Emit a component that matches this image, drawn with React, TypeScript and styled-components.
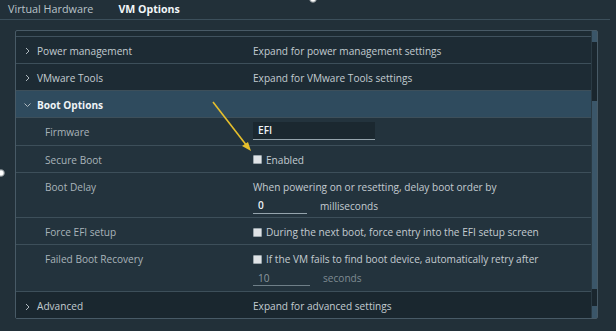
import styled, { createGlobalStyle } from "styled-components";

const GlobalStyle = createGlobalStyle`
  html, body {
    margin: 0;
    padding: 0;
    background: #223039;
  }
  body {
    font-family: "Open Sans", "Liberation Sans", sans-serif;
    font-size: 10.1px;
    color: #c3ccd1;
  }
`

const Page = styled.div`
  position: relative;
  width: 616px;
  height: 331px;
  overflow: hidden;
  background: #223039;
`

const Tabs = styled.div`
  display: flex;
  gap: 25px;
  height: 20px;
  padding-left: 8px;
  margin-right: 6px;
  border-bottom: 1px solid #3c4f5b;
  box-sizing: border-box;
`

const Tab = styled.div<{ $active?: boolean }>`
  font-size: ${(p) => (p.$active ? 10.6 : 10.8)}px;
  line-height: 14px;
  margin-top: 2px;
  color: ${(p) => (p.$active ? "#f2f6f8" : "#b9c3c9")};
  font-weight: ${(p) => (p.$active ? 700 : 400)};
`

const Panel = styled.div`
  display: flex;
  margin: 10px 18px 0 15px;
  height: 287px;
  border: 1px solid #485a66;
  border-radius: 2px;
  background: #1d2b33;
`

const List = styled.div`
  flex: 1;
  display: flex;
  flex-direction: column;
`

const TopStrip = styled.div`
  height: 5px;
  border-bottom: 1px solid #40525e;
`

const Row = styled.div<{ $tone?: "collapsed" | "header" | "child" | "dark"; $h?: number }>`
  display: grid;
  grid-template-columns: 237px 1fr;
  height: ${(p) => p.$h ?? 26}px;
  border-bottom: 1px solid #3d4f5a;
  background: ${(p) =>
    p.$tone === "header"
      ? "#2f4b5e"
      : p.$tone === "child"
      ? "#23333d"
      : p.$tone === "dark"
      ? "#1a272f"
      : "#1d2b34"};
  &:last-child {
    border-bottom: none;
  }
`

const Label = styled.div<{ $indent?: number; $bold?: boolean; $dim?: boolean }>`
  display: flex;
  align-items: flex-start;
  padding-left: ${(p) => p.$indent ?? 8}px;
  padding-top: 8px;
  font-weight: ${(p) => (p.$bold ? 700 : 400)};
  color: ${(p) => (p.$bold ? "#eef3f6" : p.$dim ? "#a9b4ba" : "#c3ccd1")};
  line-height: 13px;
`

const Chevron = styled.span<{ $open?: boolean }>`
  display: inline-flex;
  width: 12px;
  height: 13px;
  align-items: center;
  margin-right: 1px;
  svg {
    transform: rotate(${(p) => (p.$open ? 90 : 0)}deg);
  }
`

const Value = styled.div<{ $top?: number }>`
  display: flex;
  flex-direction: column;
  padding-top: ${(p) => p.$top ?? 8}px;
  line-height: 13px;
  color: #c3ccd1;
`

const Line = styled.div`
  display: flex;
  align-items: center;
  gap: 4px;
`

const Box = styled.span`
  width: 9px;
  height: 9px;
  border-radius: 1px;
  background: #dfe3e6;
  border: 1px solid #9aa5ab;
  box-sizing: border-box;
  margin-bottom: 1px;
`

const Field = styled.div<{ $w: number; $h?: number; $dim?: boolean; $filled?: boolean }>`
  width: ${(p) => p.$w}px;
  height: ${(p) => p.$h ?? 15}px;
  padding-left: 5px;
  box-sizing: border-box;
  display: flex;
  align-items: center;
  background: ${(p) => (p.$filled ? "#1b2830" : "transparent")};
  border-bottom: 1px solid ${(p) => (p.$dim ? "#6f7f88" : "#95a4ad")};
  color: ${(p) => (p.$dim ? "#8d999f" : "#eef3f6")};
  font-weight: ${(p) => (p.$dim ? 400 : 600)};
`

const FieldRow = styled.div`
  display: flex;
  align-items: center;
  gap: 13px;
  margin-top: 5px;
`

const Unit = styled.span<{ $dim?: boolean }>`
  color: ${(p) => (p.$dim ? "#7f8b92" : "#c3ccd1")};
`

const Scrollbar = styled.div`
  width: 5px;
  display: flex;
  flex-direction: column;
  background: #1a262e;
  border-left: 1px solid #2a3a44;
`

const ScrollPart = styled.div<{ $h: number; $light?: boolean }>`
  height: ${(p) => p.$h}px;
  flex: ${(p) => (p.$h === 0 ? 1 : "none")};
  background: ${(p) => (p.$light ? "#3b5669" : "transparent")};
`

const Arrow = styled.svg`
  position: absolute;
  left: 205px;
  top: 95px;
  pointer-events: none;
`

const Handle = styled.div<{ $x: number; $y: number }>`
  position: absolute;
  left: ${(p) => p.$x}px;
  top: ${(p) => p.$y}px;
  width: 8px;
  height: 8px;
  border-radius: 50%;
  background: radial-gradient(circle, #ffffff 35%, rgba(255, 255, 255, 0.2) 70%, transparent 75%);
`

const ChevronIcon = () => (
  <svg width="7" height="8" viewBox="0 0 7 8">
    <path d="M2 1 L5 4 L2 7" fill="none" stroke="#aeb8be" strokeWidth="1" />
  </svg>
)

const Collapsed = ({ title, desc, tone }: { title: string; desc: string; tone?: "dark" }) => (
  <Row $tone={tone ?? "collapsed"}>
    <Label>
      <Chevron><ChevronIcon /></Chevron>
      {title}
    </Label>
    <Value>{desc}</Value>
  </Row>
)

export default function App() {
  return (
    <Page>
      <GlobalStyle />
      <Tabs>
        <Tab>Virtual Hardware</Tab>
        <Tab $active>VM Options</Tab>
      </Tabs>
      <Panel>
        <List>
          <TopStrip />
          <Collapsed title="Power management" desc="Expand for power management settings" />
          <Collapsed title="VMware Tools" desc="Expand for VMware Tools settings" />
          <Row $tone="header">
            <Label $bold>
              <Chevron $open><ChevronIcon /></Chevron>
              Boot Options
            </Label>
            <div />
          </Row>
          <Row $tone="child" $h={27}>
            <Label $indent={29} $dim>Firmware</Label>
            <Value $top={4}>
              <Field $w={122} $h={18} $filled>EFI</Field>
            </Value>
          </Row>
          <Row $tone="child">
            <Label $indent={29} $dim>Secure Boot</Label>
            <Value>
              <Line><Box />Enabled</Line>
            </Value>
          </Row>
          <Row $tone="child" $h={45}>
            <Label $indent={29} $dim>Boot Delay</Label>
            <Value>
              <div>When powering on or resetting, delay boot order by</div>
              <FieldRow>
                <Field $w={54}>0</Field>
                <span>milliseconds</span>
              </FieldRow>
            </Value>
          </Row>
          <Row $tone="child">
            <Label $indent={29} $dim>Force EFI setup</Label>
            <Value>
              <Line><Box />During the next boot, force entry into the EFI setup screen</Line>
            </Value>
          </Row>
          <Row $tone="child" $h={46}>
            <Label $indent={29} $dim>Failed Boot Recovery</Label>
            <Value>
              <Line><Box />If the VM fails to find boot device, automatically retry after</Line>
              <FieldRow>
                <Field $w={57} $dim>10</Field>
                <Unit $dim>seconds</Unit>
              </FieldRow>
            </Value>
          </Row>
          <Collapsed title="Advanced" desc="Expand for advanced settings" tone="dark" />
        </List>
        <Scrollbar>
          <ScrollPart $h={11} $light />
          <ScrollPart $h={59} />
          <ScrollPart $h={188} $light />
          <ScrollPart $h={0} />
          <ScrollPart $h={12} $light />
        </Scrollbar>
      </Panel>
      <Arrow width="52" height="60" viewBox="0 0 52 60">
        <line x1="8" y1="7" x2="42" y2="51" stroke="#e6bf2c" strokeWidth="1.6" />
        <path d="M46 56 L37 51 L43 47 Z" fill="#e6bf2c" />
      </Arrow>
      <Handle $x={-3} $y={169} />
      <Handle $x={309} $y={-5} />
    </Page>
  )
}
